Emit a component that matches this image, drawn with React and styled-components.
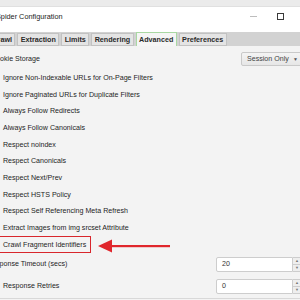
import React from "react";
import styled, { createGlobalStyle } from "styled-components";

const Global = createGlobalStyle`
  html, body { margin: 0; padding: 0; }
  body { width: 300px; height: 300px; overflow: hidden; background: #f3f3f3; }
  * { box-sizing: border-box; }
`;

const FONT = `"Liberation Sans", Arial, sans-serif`;

const Page = styled.div`
  position: relative;
  width: 300px;
  height: 300px;
  overflow: hidden;
  background: #f3f3f3;
  font-family: ${FONT};
  color: #1e1e1e;
`;

const Window = styled.div`
  margin-left: -24px;
  width: 346px;
  display: flex;
  flex-direction: column;
`;

const TopBand = styled.div`
  height: 7px;
  background: #ebebeb;
  border-bottom: 1px solid #e0e0e0;
`;

const TitleBar = styled.div`
  height: 25px;
  background: #ffffff;
  display: flex;
  align-items: center;
  padding: 0 0 6px 20px;
`;

const Title = styled.span`
  font-size: 7.3px;
  color: #1a1a1a;
`;

const Controls = styled.div`
  margin-left: auto;
  display: flex;
  height: 100%;
`;

const CtrlButton = styled.div`
  position: relative;
  width: 27.5px;
  height: 100%;
  display: flex;
  align-items: center;
  justify-content: center;
`;

const MinGlyph = styled.span`
  width: 7px;
  height: 1px;
  background: #bdbdbd;
`;

const MaxGlyph = styled.span`
  width: 7px;
  height: 7px;
  border: 1px solid #3a3a3a;
`;

const CloseGlyph = styled.span`
  position: relative;
  width: 7px;
  height: 7px;
  &::before, &::after {
    content: "";
    position: absolute;
    left: -1px;
    top: 3px;
    width: 9px;
    height: 1px;
    background: #333;
    transform: rotate(45deg);
  }
  &::after { transform: rotate(-45deg); }
`;

const TabStrip = styled.div`
  height: 14px;
  background: #d2d2d2;
  display: flex;
  align-items: flex-end;
  gap: 2px;
  padding-left: 13px;
`;

const Tab = styled.div`
  height: ${(p) => (p.$active ? "14px" : "13px")};
  padding: 0 2.4px;
  display: flex;
  align-items: center;
  font-size: 7.2px;
  font-weight: bold;
  color: #2a2a2a;
  white-space: nowrap;
  background: ${(p) => (p.$active ? "#f5f5f5" : "#e4e4e4")};
  border: 1px solid ${(p) => (p.$active ? "#a9d8a3" : "#c2c2c2")};
  border-bottom: ${(p) => (p.$active ? "none" : "1px solid #c2c2c2")};
`;

const Panel = styled.div`
  display: flex;
  flex-direction: column;
  padding: 6px 20px 4px 8px;
  border-bottom: 1px solid #d8d8d8;
`;

const SettingRow = styled.div`
  display: flex;
  align-items: center;
  height: ${(p) => p.$h || 14}px;
  margin-top: ${(p) => p.$mt || 0}px;
`;

const Label = styled.span`
  font-size: 7.1px;
  padding-left: ${(p) => p.$indent || 0}px;
  white-space: nowrap;
`;

const Select = styled.div`
  margin-left: auto;
  width: 61px;
  height: 14px;
  display: flex;
  align-items: center;
  padding: 0 3px 0 5px;
  font-size: 7.1px;
  color: #444;
  border: 1px solid #c9c9c9;
  border-radius: 2px;
  background: linear-gradient(#f4f4f4, #e6e6e6);
`;

const Caret = styled.span`
  margin-left: auto;
  font-size: 5px;
  color: #555;
`;

const CheckList = styled.div`
  display: flex;
  flex-direction: column;
  margin-top: 3.6px;
`;

const CheckRow = styled.div`
  display: flex;
  align-items: center;
  gap: 5px;
  width: fit-content;
  height: 16.7px;
  padding: 0 5px 0 3px;
  font-size: 7.1px;
  white-space: nowrap;
  outline: ${(p) => (p.$highlight ? "1.6px solid #d8262c" : "none")};
  outline-offset: -1.6px;
`;

const Box = styled.span`
  width: 11px;
  height: 11px;
  border: 1px solid #8a8a8a;
  background: #fff;
  flex: none;
`;

const Spinner = styled.div`
  margin-left: auto;
  display: flex;
  height: 15px;
`;

const SpinInput = styled.div`
  width: 77px;
  height: 15px;
  display: flex;
  align-items: center;
  padding-left: 5px;
  font-size: 7.1px;
  color: #333;
  background: #fff;
  border: 1px solid #cdcdcd;
  border-radius: 2px 0 0 2px;
`;

const SpinButtons = styled.div`
  width: 9px;
  display: flex;
  flex-direction: column;
`;

const SpinButton = styled.div`
  flex: 1;
  display: flex;
  align-items: center;
  justify-content: center;
  background: #eeeeee;
  border: 1px solid #cdcdcd;
  border-left: none;
  border-top: ${(p) => (p.$down ? "none" : "1px solid #cdcdcd")};
  font-size: 4px;
  color: #777;
  line-height: 1;
`;

const Arrow = styled.svg`
  position: absolute;
  left: 98px;
  top: 239px;
`;

const checks = [
  "Ignore Non-Indexable URLs for On-Page Filters",
  "Ignore Paginated URLs for Duplicate Filters",
  "Always Follow Redirects",
  "Always Follow Canonicals",
  "Respect noindex",
  "Respect Canonicals",
  "Respect Next/Prev",
  "Respect HSTS Policy",
  "Respect Self Referencing Meta Refresh",
  "Extract Images from img srcset Attribute",
  "Crawl Fragment Identifiers",
];

const tabs = ["Crawl", "Extraction", "Limits", "Rendering", "Advanced", "Preferences"];

function NumberField({ value }) {
  return (
    <Spinner>
      <SpinInput>{value}</SpinInput>
      <SpinButtons>
        <SpinButton>▲</SpinButton>
        <SpinButton $down>▼</SpinButton>
      </SpinButtons>
    </Spinner>
  );
}

export default function App() {
  return (
    <Page>
      <Global />
      <Window>
        <TopBand />
        <TitleBar>
          <Title>Spider Configuration</Title>
          <Controls>
            <CtrlButton><MinGlyph /></CtrlButton>
            <CtrlButton><MaxGlyph /></CtrlButton>
            <CtrlButton><CloseGlyph /></CtrlButton>
          </Controls>
        </TitleBar>
        <TabStrip>
          {tabs.map((t) => (
            <Tab key={t} $active={t === "Advanced"}>{t}</Tab>
          ))}
        </TabStrip>
        <Panel>
          <SettingRow>
            <Label $indent={7}>Cookie Storage</Label>
            <Select>
              Session Only
              <Caret>▼</Caret>
            </Select>
          </SettingRow>
          <CheckList>
            {checks.map((c) => (
              <CheckRow key={c} $highlight={c === "Crawl Fragment Identifiers"}>
                <Box />
                {c}
              </CheckRow>
            ))}
          </CheckList>
          <SettingRow $h={15} $mt={3.65}>
            <Label $indent={3}>Response Timeout (secs)</Label>
            <NumberField value="20" />
          </SettingRow>
          <SettingRow $h={15} $mt={7}>
            <Label $indent={19}>Response Retries</Label>
            <NumberField value="0" />
          </SettingRow>
        </Panel>
      </Window>
      <Arrow width="74" height="14" viewBox="0 0 74 14">
        <polygon points="0,7 14,0.5 14,13.5" fill="#e0262c" />
        <rect x="13" y="6" width="59" height="2.2" fill="#e0262c" />
      </Arrow>
    </Page>
  );
}
